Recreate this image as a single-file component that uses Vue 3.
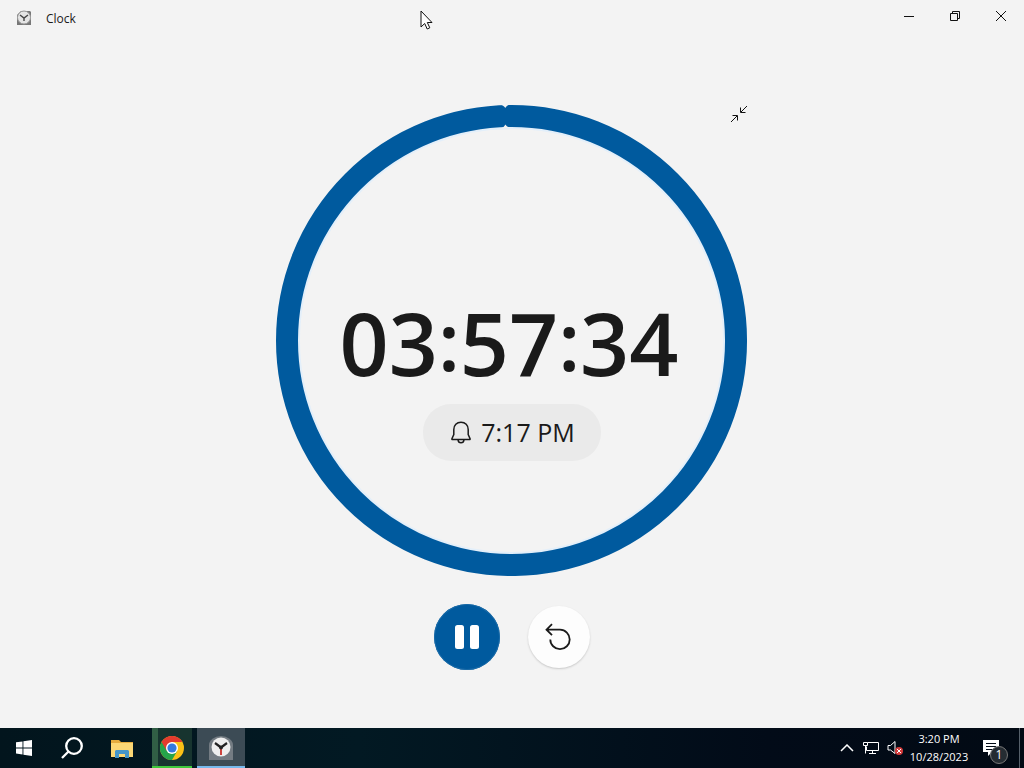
<script setup>
import { ref, computed } from 'vue'

const remaining = ref('03:57:34')
const endsAt = ref('7:17 PM')
const characters = computed(() => remaining.value.split(''))
</script>

<template>
  <div class="desktop">
    <header class="titlebar">
      <svg class="app-icon" viewBox="0 0 16 16" aria-hidden="true">
        <path d="M1 15V5l4-4h9l1 1v13z" fill="#777" />
        <circle cx="8" cy="7.500" r="6.500" fill="#e4e4e4" stroke="#999" />
        <path d="M4 5l4 3 4-3M8 8v3" fill="none" stroke="#444" stroke-width="1.400" />
      </svg>
      <h1 class="title">Clock</h1>
      <div class="window-controls">
        <button aria-label="Minimize">
          <svg viewBox="0 0 12 12"><path d="M1 6.500h10" /></svg>
        </button>
        <button aria-label="Restore">
          <svg viewBox="0 0 12 12"><path d="M1.500 3.500h7v7h-7zM3.500 3.500v-2h7v7h-2" /></svg>
        </button>
        <button aria-label="Close">
          <svg viewBox="0 0 12 12"><path d="M1 1l10 10M11 1L1 11" /></svg>
        </button>
      </div>
    </header>

    <main class="timer">
      <div class="dial">
        <svg class="ring" viewBox="0 0 471 471" aria-hidden="true">
          <circle cx="235.500" cy="235.500" r="213" fill="none" stroke="#e3effa" stroke-width="3" />
          <circle class="progress" cx="235.500" cy="235.500" r="224.500" />
          <path d="M223 -1C226 0 228 1 229.300 3C230.500 1 232 0 235 -1z" fill="#f3f3f3" />
          <path d="M224 23.500C227 22.500 228.500 21.500 229.300 19.500C230.500 21.500 232 22 235 23z" fill="#f3f3f3" />
        </svg>
        <div class="readout">
          <time class="remaining"><span
            v-for="(character, index) in characters"
            :key="index"
            :class="{ colon: character === ':' }"
          >{{ character }}</span></time>
          <div class="ends">
            <svg viewBox="0 0 24 24" aria-hidden="true">
              <path d="M12 1.200c-4.300 0-7.200 3.200-7.200 7.300v5l-1.900 4.200c-.2.500.1.900.6.900h17c.5 0 .8-.4.6-.9l-1.900-4.200v-5c0-4.100-2.900-7.300-7.200-7.300zM9 18.800c.2 1.700 1.400 2.900 3 2.900s2.800-1.200 3-2.900" />
            </svg>
            <span>{{ endsAt }}</span>
          </div>
        </div>
        <button class="collapse" aria-label="Exit full view">
          <svg viewBox="0 0 18 18"><path d="M17 1l-6 6M10.500 2.500v5h5M1 17l6-6M2.500 10.500h5v5" /></svg>
        </button>
      </div>

      <div class="actions">
        <button class="pause" aria-label="Pause">
          <svg viewBox="0 0 24 24"><rect x="0" y="0" width="9" height="24" rx="2.500" /><rect x="15" y="0" width="9" height="24" rx="2.500" /></svg>
        </button>
        <button class="reset" aria-label="Reset">
          <svg viewBox="0 0 28 28"><path d="M7 1.200L1.500 6.700l5.500 5.500M1.500 6.700H15a9.700 9.700 0 1 1-9.700 9.700" /></svg>
        </button>
      </div>
    </main>

    <footer class="taskbar">
      <nav class="apps">
        <button aria-label="Start">
          <svg class="start" viewBox="0 0 16 16"><path d="M0 2.300l6.500-.9v6.100H0zM7.400 1.300L16 0v7.500H7.400zM0 8.400h6.500v6.100L0 13.600zM7.400 8.400H16V16l-8.600-1.300z" fill="#fff" /></svg>
        </button>
        <button aria-label="Search">
          <svg class="search" viewBox="0 0 22 22"><circle cx="13" cy="9" r="7.800" /><path d="M7.500 14.500L1 21" /></svg>
        </button>
        <button aria-label="File Explorer">
          <svg class="folder" viewBox="0 0 22 19">
            <path d="M0 1h8l2 2h12v15H0z" fill="#e5ac3f" />
            <path d="M0 4h22v14H0z" fill="#fbd775" />
            <path d="M4 19v-7l1-1h12l1 1v7h-4v-4H8v4z" fill="#4596c9" />
          </svg>
        </button>
        <button class="chrome" aria-label="Google Chrome">
          <svg viewBox="0 0 24 24">
            <circle cx="12" cy="12" r="12" fill="#fbc116" />
            <path d="M12 12L1.600 6A12 12 0 0 0 12 24l5.200-9z" fill="#25a44a" />
            <path d="M1.600 6a12 12 0 0 1 20.800 0H12l-5.200 9z" fill="#e33b2e" />
            <circle cx="12" cy="12" r="6" fill="#fff" />
            <circle cx="12" cy="12" r="4.600" fill="#3479df" />
          </svg>
        </button>
        <button class="clock-app" aria-label="Clock">
          <svg viewBox="0 0 24 24">
            <path d="M0 24V9a12 9 0 0 1 24 0v15z" fill="#747c83" />
            <circle cx="12" cy="11" r="9.500" fill="#eee" />
            <path d="M12 11v8" stroke="#c9302b" stroke-width="1.800" />
            <path d="M6 7l6 4.500L18 7" fill="none" stroke="#222" stroke-width="2.200" />
            <circle cx="12" cy="11.500" r="2" fill="#222" />
          </svg>
        </button>
      </nav>
      <div class="tray">
        <button class="more" aria-label="Show hidden icons">
          <svg viewBox="0 0 14 8"><path d="M1 7l6-6 6 6" /></svg>
        </button>
        <button class="network" aria-label="Network">
          <svg viewBox="0 0 18 14"><path d="M5.500 1.500h11v8h-12v-4M1.500 1.500h4v3h-4zM3.500 4.500v8M10.500 9.500v3M7 12.500h7" /></svg>
        </button>
        <button class="volume" aria-label="Volume muted">
          <svg viewBox="0 0 16 16">
            <path d="M1 5.500h2.500L8 1.500v12L3.500 10H1z" fill="none" stroke="#fff" />
            <circle cx="12" cy="11" r="4" fill="#d33b3b" />
            <path d="M10 9l4 4M14 9l-4 4" stroke="#fff" />
          </svg>
        </button>
        <button class="datetime"><span>3:20 PM</span><span>10/28/2023</span></button>
        <button class="notifications" aria-label="1 new notification">
          <svg viewBox="0 0 16 16"><path d="M0 0h16v12H9l-4 4v-4H0z" fill="#fff" /><path d="M3 3.500h10M3 6.500h10M3 9.500h7" stroke="#020b16" /></svg>
          <span class="badge">1</span>
        </button>
        <span class="peek"></span>
      </div>
    </footer>

    <svg class="pointer" viewBox="0 0 13 20" aria-hidden="true">
      <path d="M1 1v16l3.700-3.500L7.200 19l2.600-1.200-2.500-5.300H12z" fill="#fff" stroke="#111" />
    </svg>
  </div>
</template>

<style>
body {
  margin: 0;
}
</style>

<style scoped>
.desktop {
  position: relative;
  display: flex;
  flex-direction: column;
  min-height: 100vh;
  background: #f3f3f3;
  color: #1a1a1a;
  font-family: "Open Sans", "Noto Sans", sans-serif;
}
button {
  display: flex;
  align-items: center;
  justify-content: center;
  padding: 0;
  border: 0;
  background: none;
  color: inherit;
  font: inherit;
}
svg {
  display: block;
}
.titlebar {
  display: flex;
  align-items: flex-start;
  height: 32px;
}
.app-icon {
  width: 16px;
  height: 16px;
  margin: 10px 14px 0 16px;
}
.title {
  margin: 10px 0 0;
  font-size: 12px;
  line-height: 18px;
  font-weight: 400;
}
.window-controls {
  display: flex;
  margin-left: auto;
}
.window-controls button {
  width: 46px;
  height: 32px;
}
.window-controls svg {
  width: 12px;
  height: 12px;
  fill: none;
  stroke: #111;
}
.timer {
  flex: 1;
  display: flex;
  flex-direction: column;
  align-items: center;
  padding: 73px 0 56px;
}
.dial {
  position: relative;
  width: min(46vw, 62vh);
}
.ring {
  width: 100%;
}
.progress {
  fill: none;
  stroke: #005a9e;
  stroke-width: 22;
}
.readout {
  position: absolute;
  inset: 0;
  display: flex;
  flex-direction: column;
  align-items: center;
  padding-top: 190px;
}
.remaining {
  display: flex;
  padding-right: 6px;
  font-size: 86px;
  line-height: 96px;
  font-weight: 600;
}
.colon {
  font-size: 80px;
  line-height: 90px;
}
.ends {
  display: flex;
  align-items: center;
  gap: 8px;
  margin-top: 13px;
  padding: 0 26px;
  border-radius: 28px;
  background: #eaeaea;
  font-size: 25px;
  line-height: 57px;
}
.ends svg {
  width: 24px;
  height: 24px;
  fill: none;
  stroke: #1a1a1a;
  stroke-width: 1.5;
}
.collapse {
  position: absolute;
  top: 0;
  right: 0;
}
.collapse svg {
  width: 18px;
  height: 18px;
  fill: none;
  stroke: #111;
}
.actions {
  display: flex;
  align-items: center;
  gap: 28px;
  margin-top: 28px;
}
.actions button {
  border-radius: 50%;
}
.pause {
  width: 66px;
  height: 66px;
  background: #005a9e;
  box-shadow: inset 0 0 0 1px #1a6ba8;
}
.pause svg {
  width: 24px;
  height: 24px;
  fill: #fff;
}
.reset {
  width: 62px;
  height: 62px;
  background: #fdfdfd;
  box-shadow: 0 1px 2px #c8c8c8;
}
.reset svg {
  width: 28px;
  height: 28px;
  fill: none;
  stroke: #1a1a1a;
  stroke-width: 1.8;
}
.taskbar {
  display: flex;
  justify-content: space-between;
  height: 40px;
  background: linear-gradient(90deg, #02151d, #021923 35%, #020b18 75%, #020a14);
  color: #fff;
}
.apps,
.tray {
  display: flex;
}
.apps button {
  width: 48px;
}
.apps button:nth-child(3) {
  width: 52px;
}
.start {
  width: 16px;
  height: 16px;
}
.search {
  width: 22px;
  height: 22px;
  fill: none;
  stroke: #fff;
  stroke-width: 2.3;
}
.folder {
  width: 22px;
  height: 19px;
}
.apps .chrome {
  width: 40px;
  margin-left: 4px;
  background: linear-gradient(90deg, #315e45 6px, #17342f 6px);
  box-shadow: inset 0 -2px #3fc83b;
}
.chrome svg,
.clock-app svg {
  width: 24px;
  height: 24px;
}
.apps .clock-app {
  margin-left: 5px;
  background: #3c4b55;
  box-shadow: inset 0 -2px #76b9ed;
}
.tray svg {
  fill: none;
  stroke: #fff;
}
.more {
  width: 24px;
}
.more svg {
  width: 14px;
  height: 8px;
  stroke-width: 1.5;
}
.network {
  width: 24px;
}
.network svg {
  width: 18px;
  height: 14px;
}
.volume {
  width: 24px;
}
.volume svg {
  width: 16px;
  height: 16px;
  stroke: none;
}
.tray .datetime {
  flex-direction: column;
  width: 64px;
  font-size: 11px;
  line-height: 18px;
}
.notifications {
  position: relative;
  width: 48px;
}
.notifications svg {
  width: 16px;
  height: 16px;
  margin-right: 8px;
  stroke: none;
}
.badge {
  position: absolute;
  left: 19px;
  top: 18px;
  width: 16px;
  height: 16px;
  border: 1px solid #777;
  border-radius: 50%;
  background: #252c32;
  font-size: 12px;
  line-height: 16px;
  text-align: center;
}
.peek {
  width: 4px;
  border-left: 1px solid #56606a;
}
.pointer {
  position: absolute;
  left: 41%;
  top: 10px;
  width: 13px;
  height: 20px;
}
</style>
